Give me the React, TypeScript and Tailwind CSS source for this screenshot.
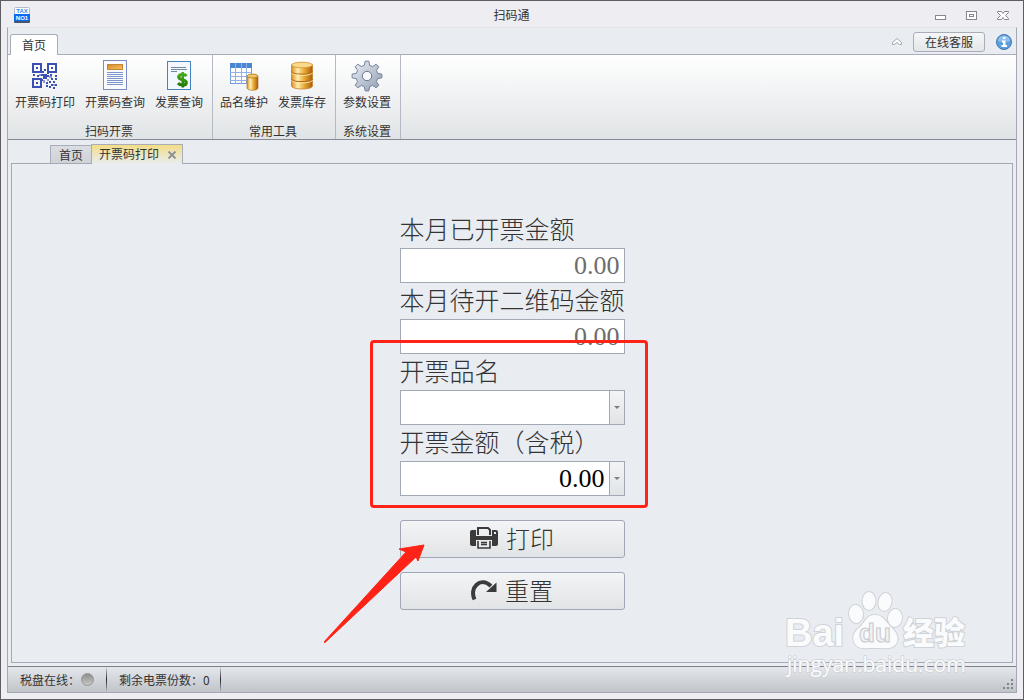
import { useState, type ReactNode } from 'react';

type RibbonItem = { label: string; icon: ReactNode };
type RibbonGroupProps = { title: string; items: RibbonItem[] };

function AppLogo() {
  return (
    <svg width="16" height="16" viewBox="0 0 16 16" aria-hidden="true">
      <rect x="0.5" y="0.5" width="15" height="15" rx="1" fill="#fff" stroke="#b5bcc9" />
      <rect x="0" y="7" width="16" height="8" fill="#0a6cf0" />
      <rect x="0" y="14" width="16" height="2" rx="1" fill="#46566e" />
      <text x="8" y="6" textAnchor="middle" fontSize="6" fontWeight="700" fill="#2b8be8" fontFamily="Liberation Sans, sans-serif">TAX</text>
      <text x="8" y="13" textAnchor="middle" fontSize="6" fontWeight="700" fill="#fff" fontFamily="Liberation Sans, sans-serif">NO1</text>
    </svg>
  );
}

function QrIcon() {
  const dots = [
    [13, 11], [15, 9], [12, 14], [8, 15], [4, 14], [18, 12], [18, 15], [21, 14], [26, 15], [12, 19],
    [22, 18], [26, 18], [20, 21], [24, 21], [17, 22], [22, 24], [26, 24], [20, 26], [24, 27], [17, 25],
  ];
  return (
    <svg width="32" height="32" viewBox="0 0 32 32" aria-hidden="true">
      <g fill="none" stroke="#3c50b4" strokeWidth="2">
        <rect x="4" y="4" width="8" height="8" />
        <rect x="19" y="4" width="8" height="8" />
        <rect x="4" y="19" width="8" height="8" />
      </g>
      <g fill="#3c50b4">
        <rect x="7" y="7" width="2" height="2" />
        <rect x="22" y="7" width="2" height="2" />
        <rect x="7" y="22" width="2" height="2" />
        <rect x="14" y="14" width="4" height="5" />
        {dots.map(([x, y]) => (
          <rect key={`${x}-${y}`} x={x} y={y} width="2" height="2" />
        ))}
      </g>
      <g fill="#8d9ad6">
        <rect x="10" y="14" width="2" height="2" />
        <rect x="20" y="16" width="3" height="2" />
        <rect x="14" y="20" width="2" height="3" />
        <rect x="18" y="19" width="2" height="2" />
        <rect x="24" y="24" width="2" height="2" />
      </g>
    </svg>
  );
}

function DocumentIcon() {
  return (
    <svg width="32" height="32" viewBox="0 0 32 32" aria-hidden="true">
      <defs>
        <linearGradient id="docOrange" x1="0" x2="1" y1="0" y2="1">
          <stop offset="0" stopColor="#d08a2e" />
          <stop offset="1" stopColor="#f8bf62" />
        </linearGradient>
      </defs>
      <rect x="4.5" y="0.5" width="23" height="29" fill="#f8fafe" stroke="#7d8bc0" />
      <rect x="8.5" y="4.5" width="15" height="5" fill="url(#docOrange)" stroke="#c8862f" />
      <path d="M8 12.5h16M8 14.5h16M8 16.5h16M8 18.5h16M8 20.5h16M8 22.5h16M8 24.5h16" stroke="#7d94c8" />
    </svg>
  );
}

function InvoiceIcon() {
  return (
    <svg width="32" height="32" viewBox="0 0 32 32" aria-hidden="true">
      <defs>
        <linearGradient id="dollar" gradientUnits="userSpaceOnUse" x1="0" x2="0" y1="11" y2="28">
          <stop offset="0" stopColor="#4fb51d" />
          <stop offset="1" stopColor="#1d7409" />
        </linearGradient>
      </defs>
      <rect x="4.5" y="1.5" width="23" height="28" fill="#f2f8fe" stroke="#4483bd" />
      <path d="M8 7.5h15M8 9.5h16M8 11.5h6" stroke="#73899c" />
      <path
        d="M23.5 16c-1-1.200-2.300-1.600-4-1.500-2.500.1-3.800 1.100-3.800 2.500 0 3.400 7.600 2 7.600 5.400 0 1.700-1.500 2.600-3.900 2.600-1.900 0-3.300-.6-4.400-1.800"
        fill="none"
        stroke="url(#dollar)"
        strokeWidth="3.200"
      />
      <path d="M18.500 12h2.500v15.500h-2.500z" fill="url(#dollar)" />
    </svg>
  );
}

function GoldGradient({ id }: { id: string }) {
  return (
    <linearGradient id={id} x1="0" x2="1" y1="0" y2="0">
      <stop offset="0" stopColor="#d88f22" />
      <stop offset="0.3" stopColor="#ffeeb0" />
      <stop offset="0.6" stopColor="#e9ab35" />
      <stop offset="1" stopColor="#a85b0b" />
    </linearGradient>
  );
}

function TableDbIcon() {
  return (
    <svg width="32" height="32" viewBox="0 0 32 32" aria-hidden="true">
      <defs>
        <GoldGradient id="goldSmall" />
      </defs>
      <rect x="2.5" y="3.5" width="21" height="20" fill="#fff" stroke="#6f9cd8" />
      <rect x="2" y="3" width="22" height="5" fill="#4a86d2" />
      <path d="M7.5 3v21M13.5 3v21M18.5 3v21M2 12.5h22M2 16.5h22M2 20.5h22" stroke="#8fb2e2" />
      <path d="M19 16v12c0 3 11 3 11 0V16z" fill="url(#goldSmall)" stroke="#a9660f" strokeWidth="0.6" />
      <ellipse cx="24.5" cy="16" rx="5.3" ry="2" fill="#f3c662" stroke="#a8752a" strokeWidth="0.8" />
    </svg>
  );
}

function DatabaseIcon() {
  return (
    <svg width="32" height="32" viewBox="0 0 32 32" aria-hidden="true">
      <defs>
        <GoldGradient id="goldLarge" />
      </defs>
      <path d="M5.5 5v21c0 4 21 4 21 0V5z" fill="url(#goldLarge)" stroke="#c5812a" strokeWidth="0.8" />
      <path d="M5.5 11.5c0 3.500 21 3.500 21 0M5.500 19c0 3.500 21 3.500 21 0" fill="none" stroke="#b06a15" strokeWidth="1.2" />
      <path d="M5.5 12.700c0 3.500 21 3.500 21 0M5.500 20.200c0 3.500 21 3.500 21 0" fill="none" stroke="#ffe9ac" strokeWidth="0.9" />
      <ellipse cx="16" cy="5" rx="10.5" ry="2.8" fill="#fbd98a" stroke="#cf9032" strokeWidth="0.8" />
    </svg>
  );
}

// Eight teeth, each one a short trapezium on the rim
const gearPath =
  Array.from({ length: 8 }, (_, tooth) =>
    [
      [-14, 11],
      [-7, 15],
      [7, 15],
      [14, 11],
    ]
      .map(([offset, radius]) => {
        const angle = ((tooth * 45 + offset) * Math.PI) / 180;
        return `${(16 + radius * Math.sin(angle)).toFixed(2)} ${(16 - radius * Math.cos(angle)).toFixed(2)}`;
      })
      .join('L'),
  )
    .map((points, i) => `${i === 0 ? 'M' : 'L'}${points}`)
    .join('') + 'Z';

function GearIcon() {
  return (
    <svg width="32" height="32" viewBox="0 0 32 32" aria-hidden="true">
      <defs>
        <linearGradient id="steel" x1="0" x2="1" y1="0" y2="1">
          <stop offset="0.1" stopColor="#e6eaf1" />
          <stop offset="0.6" stopColor="#b4bdcc" />
          <stop offset="1" stopColor="#8f9bb0" />
        </linearGradient>
      </defs>
      <path d={gearPath} fill="url(#steel)" stroke="#75829a" strokeLinejoin="round" />
      <circle cx="16" cy="16" r="4.7" fill="#f7f8fa" stroke="#68768e" />
    </svg>
  );
}

function PrinterIcon() {
  return (
    <svg width="28" height="22" viewBox="0 0 28 22" aria-hidden="true">
      <path
        fillRule="evenodd"
        fill="#3b3b3b"
        d="M2 3h4v6h16V3h4q2 0 2 2v12q0 2-2 2h-4v-6H6v6H2q-2 0-2-2V5q0-2 2-2zm22 2v2h2V5z"
      />
      <path d="M8 8V1h10l2 2v5" fill="none" stroke="#3b3b3b" strokeWidth="2" />
      <path d="M8 14v7h12v-7M11 15.5h6M11 17.5h6" fill="none" stroke="#3b3b3b" strokeWidth="1.6" />
    </svg>
  );
}

function ResetIcon() {
  return (
    <svg width="26" height="22" viewBox="0 0 26 22" aria-hidden="true">
      <path d="M3.500 20.500C-2 9 9-3 20 7" fill="none" stroke="#3b3b3b" strokeWidth="4" />
      <path d="M25.500 3.500V13H15z" fill="#3b3b3b" />
    </svg>
  );
}

function RibbonGroup({ title, items }: RibbonGroupProps) {
  return (
    <section className="flex flex-col justify-between border-r border-[#b5b9c4] pt-[5px] pr-1 pl-0.5">
      <div className="flex">
        {items.map((item) => (
          <button key={item.label} type="button" className="flex flex-col items-center px-[5px]">
            {item.icon}
            <span className="leading-5 whitespace-nowrap">{item.label}</span>
          </button>
        ))}
      </div>
      <h2 className="text-center leading-4 whitespace-nowrap">{title}</h2>
    </section>
  );
}

function DropArrow() {
  return (
    <svg width="6" height="3" viewBox="0 0 6 3" aria-hidden="true">
      <path d="M0 0h6L3 3z" fill="#7b7f8a" />
    </svg>
  );
}

const labelClass = 'block h-9 text-[25px] leading-8 font-light whitespace-nowrap';
const fieldClass =
  'block h-[35px] w-full border border-[#a2a9b5] bg-white px-1 text-right font-["Liberation_Serif","Noto_Sans_CJK_SC",serif] text-[26px] outline-none';
const actionClass =
  'flex h-[38px] w-full items-center justify-center gap-2 rounded-[3px] border border-[#a2a7b6] bg-linear-to-b from-[#f3f4f6] to-[#e1e4e6] pb-0.5 text-2xl leading-8 font-light';

function Annotation() {
  return (
    <div className="pointer-events-none absolute top-32 -left-[30px] h-[168px] w-[278px] rounded-[4px] border-3 border-[#ff2317]">
      <svg className="absolute top-[200px] -left-[50px]" width="104" height="102" viewBox="0 0 104 102" aria-hidden="true">
        <path d="M1 99L83 9L76 6L101 2L95 18L93 14L2 99.500Z" fill="#ff2317" stroke="#ff2317" />
      </svg>
    </div>
  );
}

function InvoiceForm() {
  const [amount, setAmount] = useState('0.00');
  const [product, setProduct] = useState('');

  const reset = () => {
    setAmount('0.00');
    setProduct('');
  };

  return (
    <form className="relative w-[225px]" onSubmit={(e) => e.preventDefault()}>
      <label htmlFor="issued" className={labelClass}>本月已开票金额</label>
      <input id="issued" className={`${fieldClass} text-[#6d6d6d]`} value="0.00" readOnly />

      <label htmlFor="pending" className={labelClass}>本月待开二维码金额</label>
      <input id="pending" className={`${fieldClass} text-[#6d6d6d]`} value="0.00" readOnly />

      <label htmlFor="product" className={labelClass}>开票品名</label>
      <div className="relative">
        <select
          id="product"
          className={`${fieldClass} appearance-none`}
          value={product}
          onChange={(e) => setProduct(e.target.value)}
        >
          <option value="" />
        </select>
        <span className="pointer-events-none absolute inset-y-px right-px flex w-[15px] items-center justify-center border-l border-[#a2a9b5] bg-linear-to-b from-[#f3f4f6] to-[#e1e4e6]">
          <DropArrow />
        </span>
      </div>

      <label htmlFor="amount" className={labelClass}>开票金额（含税）</label>
      <div className="flex">
        <input
          id="amount"
          className={`${fieldClass} min-w-0 flex-1 text-black`}
          value={amount}
          onChange={(e) => setAmount(e.target.value)}
        />
        <button
          type="button"
          aria-label="开票金额"
          className="flex w-[15px] items-center justify-center border-y border-r border-[#a2a9b5] bg-linear-to-b from-[#f3f4f6] to-[#e1e4e6]"
        >
          <DropArrow />
        </button>
      </div>

      <div className="mt-6 space-y-3.5">
        <button type="submit" className={actionClass}>
          <PrinterIcon />
          打印
        </button>
        <button type="button" className={actionClass} onClick={reset}>
          <ResetIcon />
          重置
        </button>
      </div>

      <Annotation />
    </form>
  );
}

function Watermark() {
  return (
    <svg
      className="pointer-events-none absolute right-12 bottom-[18px]"
      width="190"
      height="92"
      viewBox="0 0 190 92"
      role="img"
      aria-label="Baidu"
    >
      <g fill="#fafbfc" stroke="#cfd2d6" strokeWidth="2" paintOrder="stroke" strokeLinejoin="round">
        <ellipse cx="71" cy="25" rx="7" ry="9" transform="rotate(-8 71 25)" />
        <ellipse cx="84" cy="12" rx="6.5" ry="9" />
        <ellipse cx="100" cy="13" rx="6.5" ry="9" transform="rotate(12 100 13)" />
        <ellipse cx="110" cy="29" rx="7" ry="9" transform="rotate(8 110 29)" />
        <path d="M90 26c-9 0-10 8-16 13-5 4-7 9-5 14 3 8 11 6 21 6s19 2 22-6c2-5-1-10-5-14-6-5-8-13-17-13z" />
        <text x="0" y="57" fontSize="38" fontWeight="700" fontFamily="Liberation Sans, sans-serif">Bai</text>
        <text x="118" y="55" fontSize="31" fontWeight="900" fontFamily="Noto Sans CJK SC, sans-serif">经验</text>
        <text x="2" y="83" fontSize="21" strokeWidth="1.5" fontFamily="Open Sans, sans-serif">jingyan.baidu.com</text>
      </g>
      <text x="90" y="53" textAnchor="middle" fontSize="26" fontWeight="700" fill="#f1f3f5" stroke="#c6c9cf" fontFamily="Liberation Sans, sans-serif">du</text>
    </svg>
  );
}

function TitleBar() {
  return (
    <header className="flex h-[26px] items-center justify-between pr-2 pl-[7px]">
      <div className="flex flex-1 pt-0.5">
        <AppLogo />
      </div>
      <h1 className="pt-0.5">扫码通</h1>
      <div className="flex flex-1 justify-end gap-[19px] pt-0.5">
        <button type="button" aria-label="最小化">
          <svg width="12" height="11" viewBox="0 0 12 11" aria-hidden="true">
            <rect x="0.5" y="5.5" width="10" height="4" fill="#fff" stroke="#84878f" />
          </svg>
        </button>
        <button type="button" aria-label="最大化">
          <svg width="12" height="11" viewBox="0 0 12 11" aria-hidden="true">
            <rect x="0.5" y="1.5" width="10" height="8" fill="#fff" stroke="#84878f" />
            <rect x="3.5" y="4.5" width="4" height="2" fill="#fff" stroke="#84878f" />
          </svg>
        </button>
        <button type="button" aria-label="关闭">
          <svg width="12" height="11" viewBox="0 0 12 11" aria-hidden="true">
            <path d="M.5 1.500h4L6 3.500l1.500-2h4v1l-3 3 3 3v1h-4L6 7.500l-1.500 2h-4v-1l3-3-3-3z" fill="#fff" stroke="#84878f" />
          </svg>
        </button>
      </div>
    </header>
  );
}

export default function App() {
  return (
    <div className="relative flex min-h-screen flex-col border border-[#5d5d63] bg-[#ededf2] px-1.5 pb-1.5 font-['Noto_Sans_CJK_SC',sans-serif] text-xs text-[#333]">
      <TitleBar />

      <div className="flex flex-1 flex-col border border-t-[#e1e4e8] border-r-[#a4a9b5] border-b-[#a4a9b5] border-l-[#a4a9b5] bg-[#e9ecf1]">
        {/* Ribbon tabs */}
        <nav className="flex h-[26px] items-end justify-between pr-1 pl-0.5">
          <button
            type="button"
            className="relative -mb-px h-[21px] rounded-t-[3px] border border-b-0 border-[#a8adb9] bg-white px-[11px] leading-5"
          >
            首页
          </button>
          <div className="flex items-center gap-[11px] pb-0.5">
            <button type="button" aria-label="收起">
              <svg width="10" height="8" viewBox="0 0 10 8" aria-hidden="true">
                <path d="M.5 4.500L5 .5l4.500 4v2h-2L5 4.500l-2.500 2h-2z" fill="#fff" stroke="#a2a5ac" />
              </svg>
            </button>
            <button
              type="button"
              className="h-5 w-[72px] rounded-[3px] border border-[#a8adb9] bg-linear-to-b from-[#f5f6f7] to-[#e4e6e8] leading-[18px]"
            >
              在线客服
            </button>
            <button type="button" aria-label="关于">
              <svg width="16" height="16" viewBox="0 0 16 16" aria-hidden="true">
                <circle cx="8" cy="8" r="7.5" fill="#5e9fdd" stroke="#4474ae" />
                <path d="M2 7a6 5.500 0 0 1 12 0q-6 2-12 0z" fill="#8fc0ee" />
                <path d="M7 3h2.500v2H7zM6 6.500h3.500V11H11v2H5.500v-2H7V8.500H6z" fill="#fff" />
              </svg>
            </button>
          </div>
        </nav>

        {/* Ribbon */}
        <div className="flex h-[86px] border-y border-t-[#a8adb9] border-b-[#858993] bg-linear-to-b from-white to-[#e1e4e6]">
          <RibbonGroup
            title="扫码开票"
            items={[
              { label: '开票码打印', icon: <QrIcon /> },
              { label: '开票码查询', icon: <DocumentIcon /> },
              { label: '发票查询', icon: <InvoiceIcon /> },
            ]}
          />
          <RibbonGroup
            title="常用工具"
            items={[
              { label: '品名维护', icon: <TableDbIcon /> },
              { label: '发票库存', icon: <DatabaseIcon /> },
            ]}
          />
          <RibbonGroup title="系统设置" items={[{ label: '参数设置', icon: <GearIcon /> }]} />
        </div>

        {/* Document tabs */}
        <div className="flex items-end pt-1 pl-[42px]">
          <button
            type="button"
            className="h-[18px] border border-r-0 border-b-0 border-[#a8adb9] bg-linear-to-b from-[#dadde2] to-[#cfd2d7] px-2 leading-4"
          >
            首页
          </button>
          <div className="relative -mb-px flex h-5 items-center border border-b-0 border-[#a8adb9] bg-linear-to-b from-[#f3dd83] to-[#e9ecf1] pr-[5px] pl-[7px]">
            <button type="button" className="pb-0.5 leading-4">开票码打印</button>
            <button type="button" aria-label="关闭标签" className="ml-2">
              <svg width="10" height="8" viewBox="0 0 10 8" aria-hidden="true">
                <path d="M1.500 .5l7 7M8.500 .5l-7 7" stroke="#8b8e95" strokeWidth="1.8" />
              </svg>
            </button>
          </div>
        </div>

        <main className="mx-[3px] mb-[3px] flex flex-1 justify-center border border-[#a4a9b5] pt-12 pb-12">
          <InvoiceForm />
        </main>

        {/* Status bar */}
        <footer className="flex h-[26px] items-stretch border-t border-[#7c7f8e] bg-linear-to-b from-[#e5e7eb] to-[#c0c4c9] leading-6">
          <div className="flex items-center px-3">
            <span>税盘在线：</span>
            <svg className="ml-px" width="13" height="13" viewBox="0 0 13 13" aria-hidden="true">
              <defs>
                <linearGradient id="lamp" x1="0" x2="0" y1="0" y2="1">
                  <stop offset="0" stopColor="#8b8b8b" />
                  <stop offset="1" stopColor="#c9c9c9" />
                </linearGradient>
              </defs>
              <circle cx="6.5" cy="6.5" r="6" fill="url(#lamp)" stroke="#979797" />
            </svg>
          </div>
          <span className="w-px bg-linear-to-b from-[#d8dade] via-[#26282c] to-[#c0c4c9]" />
          <div className="flex items-center pr-2.5 pl-3">剩余电票份数：0</div>
          <span className="w-px bg-linear-to-b from-[#d8dade] via-[#26282c] to-[#c0c4c9]" />
          <svg className="mt-auto mr-0.5 mb-0.5 ml-auto" width="11" height="11" viewBox="0 0 11 11" aria-hidden="true">
            <path d="M8 0h2v2H8zM4 4h2v2H4zM8 4h2v2H8zM0 8h2v2H0zM4 8h2v2H4zM8 8h2v2H8z" fill="#80838c" />
          </svg>
        </footer>
      </div>

      <Watermark />
    </div>
  );
}
